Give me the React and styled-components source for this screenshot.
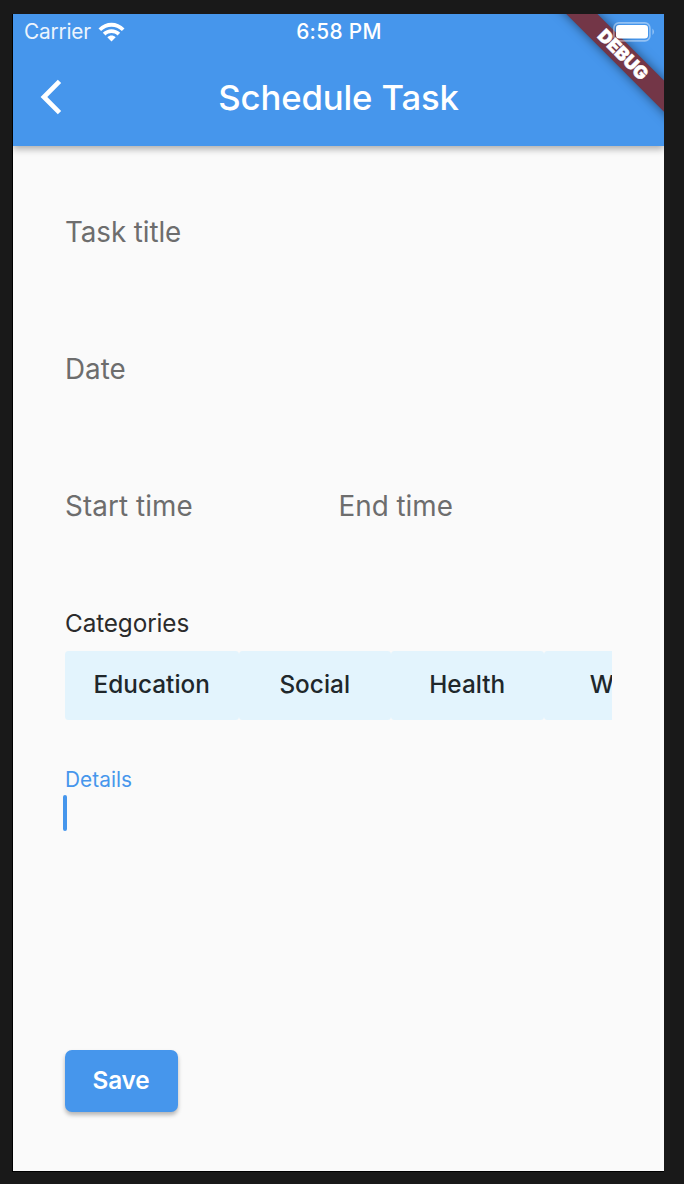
import React from "react";
import styled, { createGlobalStyle } from "styled-components";

const BLUE = "#4696ec";

const GlobalStyle = createGlobalStyle`
  * { box-sizing: border-box; }
  body {
    margin: 0;
    background: #191919;
    font-family: Inter, "Liberation Sans", sans-serif;
  }
`;

const Desktop = styled.div`
  width: 684px;
  height: 1184px;
  padding: 14px 20px 12px 12px;
  overflow: hidden;
`;

const Device = styled.div`
  display: flex;
  flex-direction: column;
  height: 1158px;
  border-left: 1px solid #000;
  border-bottom: 1px solid #000;
`;

const Screen = styled.main`
  position: relative;
  flex: 1;
  display: flex;
  flex-direction: column;
  background: #fafafa;
  overflow: hidden;
`;

const AppBar = styled.header`
  height: 132px;
  background: ${BLUE};
  box-shadow: 0 3px 7px rgba(0, 0, 0, 0.32);
`;

const StatusBar = styled.div`
  display: grid;
  grid-template-columns: 1fr auto 1fr;
  align-items: center;
  height: 35px;
  padding: 0 10px 0 11px;
  color: #fff;
  font-size: 20.8px;
  line-height: 36px;
`;

const Carrier = styled.div`
  display: flex;
  align-items: center;
  gap: 7px;
  letter-spacing: -0.2px;
`;

const CarrierName = styled.span`
  opacity: 0.9;
`;

const Clock = styled.div`
  font-weight: 500;
  letter-spacing: 0.35px;
`;

const BatterySlot = styled.div`
  position: relative;
  z-index: 2;
  display: flex;
  justify-content: flex-end;
  margin-right: -1px;
`;

const NavBar = styled.div`
  display: grid;
  grid-template-columns: 76px 1fr 76px;
  align-items: center;
  height: 96px;
`;

const BackButton = styled.button`
  display: flex;
  padding: 0 0 0 27px;
  border: 0;
  background: none;
`;

const Title = styled.h1`
  margin: 0;
  color: #fff;
  font-size: 34.7px;
  font-weight: 500;
  line-height: 40px;
  letter-spacing: -0.13px;
  text-align: center;
  white-space: nowrap;
`;

const Ribbon = styled.div`
  position: absolute;
  z-index: 1;
  top: 30px;
  right: -69px;
  width: 220px;
  height: 21.5px;
  transform: rotate(45deg);
  background: #733647;
  box-shadow: 0 0 11px rgba(0, 0, 0, 0.5);
  color: #fff;
  font-size: 18px;
  font-weight: 900;
  line-height: 21.5px;
  letter-spacing: 0;
  -webkit-text-stroke: 0.5px #fff;
  text-align: center;
`;

const Form = styled.form`
  display: flex;
  flex-direction: column;
  padding: 66px 52px 0;
`;

const FieldRow = styled.div`
  display: grid;
  grid-template-columns: repeat(${(p) => p.$columns || 1}, 1fr);
  height: 40px;
  margin-bottom: ${(p) => p.$after}px;
`;

const FieldLabel = styled.label`
  color: #6d6d6d;
  font-size: 27.8px;
  line-height: 40px;
  letter-spacing: ${(p) => p.$spacing || 0}px;
  white-space: nowrap;
`;

const SectionLabel = styled.div`
  height: 30px;
  margin-bottom: 13px;
  color: #2b2b2b;
  font-size: 24.3px;
  line-height: 30px;
  letter-spacing: -0.1px;
`;

const ChipStrip = styled.div`
  display: flex;
  height: 69px;
  overflow: hidden;
`;

const Chip = styled.button`
  flex: 0 0 ${(p) => p.$width}px;
  padding: 0 0 2px;
  border: 0;
  border-radius: 3.5px;
  background: #e3f4fd;
  color: #20272b;
  font: 500 24.3px/67px Inter, sans-serif;
  letter-spacing: 0.05px;
  text-align: center;
`;

const DetailsLabel = styled.label`
  height: 26px;
  margin-top: 47px;
  color: ${BLUE};
  font-size: 20.8px;
  line-height: 26px;
  letter-spacing: 0.05px;
`;

const DetailsArea = styled.div`
  height: 255px;
  margin: 2px 0 0 -2px;
`;

const Caret = styled.div`
  width: 4px;
  height: 36px;
  border-radius: 2px;
  background: ${BLUE};
`;

const SaveButton = styled.button`
  width: 113px;
  height: 62px;
  padding: 0 1px 2px 0;
  border: 0;
  border-radius: 7px;
  background: ${BLUE};
  box-shadow: 0 3px 4px rgba(0, 0, 0, 0.28);
  color: #fff;
  font: 600 24.3px/60px Inter, sans-serif;
  letter-spacing: -0.15px;
`;

const WifiIcon = () => (
  <svg width="27" height="20" viewBox="0 0 27 20" fill="#fff">
    <path d="M0.5 6.4 C7.8-1.1 19.2-1.1 26.5 6.4 L23.9 9.1 C18 3.2 9 3.2 3.1 9.1Z" />
    <path d="M4.8 10.8 C9.7 6 17.3 6 22.2 10.8 L19.5 13.5 C16.1 10.3 10.9 10.3 7.5 13.5Z" />
    <path d="M9.3 15.2 C11.7 13 15.3 13 17.7 15.2 L13.5 19.4Z" />
  </svg>
);

const BackIcon = () => (
  <svg width="24" height="36" viewBox="0 0 24 36" fill="none">
    <path d="M19.5 2.4 L3.9 18 L19.5 33.6" stroke="#fff" strokeWidth="4.7" />
  </svg>
);

const BatteryIcon = () => (
  <svg width="42" height="20" viewBox="0 0 42 20">
    <rect x="0.9" y="0.9" width="36" height="18" rx="5" fill="none" stroke="#fff" strokeOpacity="0.42" strokeWidth="1.6" />
    <rect x="3" y="3" width="32" height="13.6" rx="3.3" fill="#fff" />
    <path d="M39.5 6.5 Q42.2 9.7 39.5 13Z" fill="#fff" fillOpacity="0.5" />
  </svg>
);

const CATEGORIES = [
  { name: "Education", width: 173.5 },
  { name: "Social", width: 152.5 },
  { name: "Health", width: 152.5 },
  { name: "Work", width: 154 },
];

export default function App() {
  return (
    <>
      <GlobalStyle />
      <Desktop>
        <Device>
          <Screen>
            <AppBar>
              <StatusBar>
                <Carrier>
                  <CarrierName>Carrier</CarrierName>
                  <WifiIcon />
                </Carrier>
                <Clock>6:58 PM</Clock>
                <BatterySlot>
                  <BatteryIcon />
                </BatterySlot>
              </StatusBar>
              <NavBar>
                <BackButton type="button" aria-label="Back">
                  <BackIcon />
                </BackButton>
                <Title>Schedule Task</Title>
              </NavBar>
            </AppBar>
            <Ribbon>DEBUG</Ribbon>
            <Form>
              <FieldRow $after={97}>
                <FieldLabel $spacing={-0.1}>Task title</FieldLabel>
              </FieldRow>
              <FieldRow $after={97}>
                <FieldLabel>Date</FieldLabel>
              </FieldRow>
              <FieldRow $columns={2} $after={82}>
                <FieldLabel $spacing={0.1}>Start time</FieldLabel>
                <FieldLabel>End time</FieldLabel>
              </FieldRow>
              <SectionLabel>Categories</SectionLabel>
              <ChipStrip>
                {CATEGORIES.map((c) => (
                  <Chip key={c.name} type="button" $width={c.width}>
                    {c.name}
                  </Chip>
                ))}
              </ChipStrip>
              <DetailsLabel>Details</DetailsLabel>
              <DetailsArea>
                <Caret />
              </DetailsArea>
              <SaveButton type="button">Save</SaveButton>
            </Form>
          </Screen>
        </Device>
      </Desktop>
    </>
  );
}
